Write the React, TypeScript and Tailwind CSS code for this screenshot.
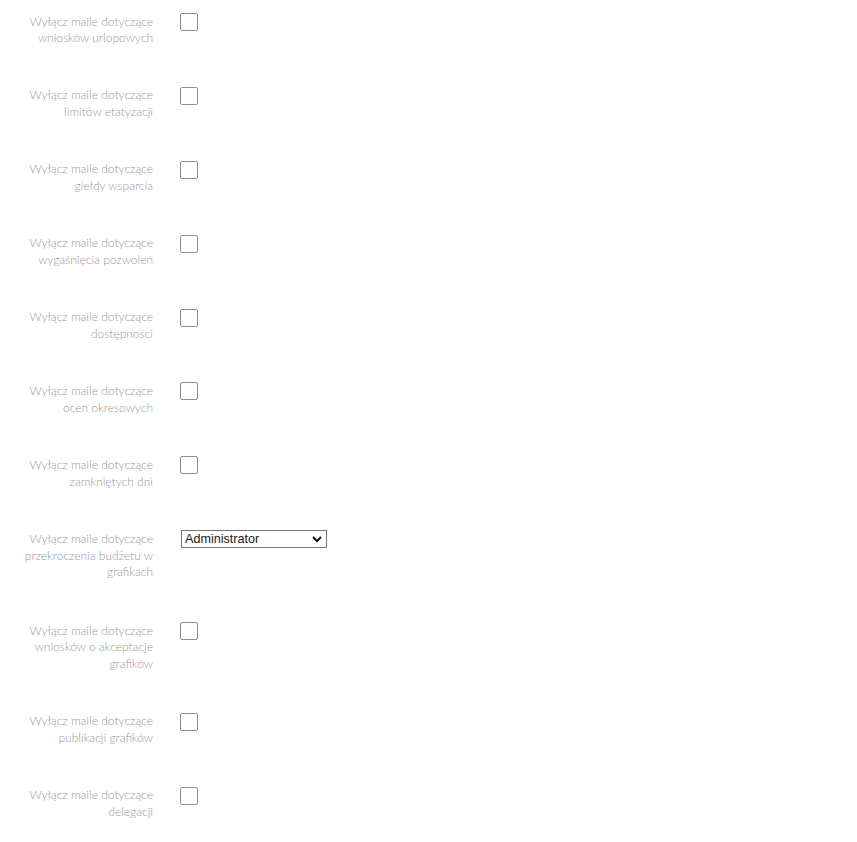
import React from "react";

const rows: { label: string[]; type: "check" | "select" }[] = [
  { label: ["Wyłącz maile dotyczące", "wniosków urlopowych"], type: "check" },
  { label: ["Wyłącz maile dotyczące", "limitów etatyzacji"], type: "check" },
  { label: ["Wyłącz maile dotyczące", "giełdy wsparcia"], type: "check" },
  { label: ["Wyłącz maile dotyczące", "wygaśnięcia pozwoleń"], type: "check" },
  { label: ["Wyłącz maile dotyczące", "dostępności"], type: "check" },
  { label: ["Wyłącz maile dotyczące", "ocen okresowych"], type: "check" },
  { label: ["Wyłącz maile dotyczące", "zamkniętych dni"], type: "check" },
  { label: ["Wyłącz maile dotyczące", "przekroczenia budżetu w", "grafikach"], type: "select" },
  { label: ["Wyłącz maile dotyczące", "wniosków o akceptacje", "grafików"], type: "check" },
  { label: ["Wyłącz maile dotyczące", "publikacji grafików"], type: "check" },
  { label: ["Wyłącz maile dotyczące", "delegacji"], type: "check" },
];

export default function App() {
  return (
    <div className="w-[857px] h-[842px] bg-white overflow-hidden pt-[13.6px] flex flex-col gap-[40.3px] font-['Lato',sans-serif]">
      {rows.map((r, i) => (
        <div key={i} className={`flex items-start ${r.type === "select" ? "pb-[1px]" : ""}`}>
          <div className="ml-[15px] w-[138px] text-right text-[12px] font-light leading-[16.8px] text-[#999999] whitespace-nowrap">
            {r.label.map((l, j) => (
              <div key={j}>{l}</div>
            ))}
          </div>
          {r.type === "check" ? (
            <div className="ml-[27px] -mt-[0.6px] w-[18px] h-[18px] border border-[#8f8f8f] rounded-[2px] bg-white" />
          ) : (
            <div className="ml-[28px] -mt-[1px] relative w-[146px] h-[18px] border border-[#767676] bg-white flex items-center pl-[3px] font-['Liberation_Sans',Arial,sans-serif] text-[12.6px] text-[#1a1a1a] leading-none">
              <span>Administrator</span>
              <svg
                className="absolute right-[4px] top-[4px]"
                width="10"
                height="8"
                viewBox="0 0 10 8"
                fill="none"
              >
                <path d="M1 2 L5 6 L9 2" stroke="#111" strokeWidth="2" />
              </svg>
            </div>
          )}
        </div>
      ))}
    </div>
  );
}
